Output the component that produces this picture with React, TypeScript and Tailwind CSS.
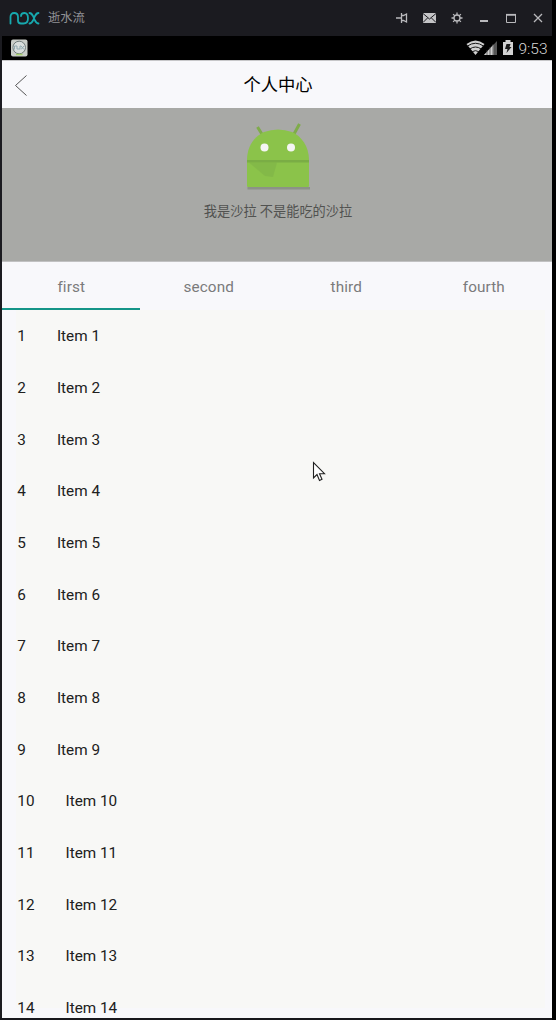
const tabs = ['first', 'second', 'third', 'fourth'];
const items = Array.from({ length: 14 }, (_, i) => i + 1);

function TitleBar() {
  return (
    <div className="flex h-9 shrink-0 items-center justify-between bg-[#1b1b20] pl-[9px] pr-[8px]">
      <div className="flex items-center gap-[8px]">
        <svg width="31" height="14" viewBox="0 0 31 14" fill="none" stroke="#17a9ae" strokeWidth="1.8" strokeLinecap="round" strokeLinejoin="round">
          <path d="M1.5 12.5V6Q1.5 2 5.2 2Q9 2 9 6V9.5Q9 12.5 12 12.5H14.500Q19 12.5 19 7.2Q19 2 15.5 2Q12 2 12 5M20.500 2Q22.500 2 24 5L26 9.5Q27.5 12.5 29.500 12.5M29.500 2Q27.5 2 26 5L24 9.5Q22.5 12.5 20.500 12.5" />
        </svg>
        <span className="pt-px text-[12.3px] leading-none text-[#929296]">逝水流</span>
      </div>
      <svg width="150" height="16" viewBox="394 10 150 16" fill="none" stroke="#b9b9bc" strokeWidth="1.3">
        <path d="M396 18H401M401.500 13V23M401.500 15.500H403.500L406.500 14V22L403.500 20.500H401.500" />
        <rect x="423" y="13" width="13" height="10" fill="#c4c4c6" stroke="none" />
        <path d="M423 13.5L429.5 19L436 13.5M423 22.5L427.5 18M436 22.5L431.5 18" stroke="#1b1b20" strokeWidth="1" />
        <circle cx="457" cy="18" r="3" />
        <path d="M457 12.5V15M457 21V23.5M451.5 18H454M460 18H462.500M453.100 14.100L454.900 15.900M459.100 20.100L460.900 21.900M460.900 14.100L459.100 15.900M454.900 20.100L453.100 21.900" />
        <path d="M480 21H488" strokeWidth="2" />
        <path d="M506.500 22.500V15H515.500V22.500Z" strokeWidth="1" />
        <path d="M506 14.700H516" strokeWidth="1.600" />
        <path d="M534 14L542 22M542 14L534 22" strokeWidth="1.300" />
      </svg>
    </div>
  );
}

function StatusBar() {
  return (
    <div className="flex h-6 shrink-0 items-center justify-between bg-black pl-[9px] pr-[3px]">
      <svg width="17" height="18" viewBox="0 0 17 18">
        <rect x="0" y="0.500" width="16.500" height="17" rx="2" fill="#c9cdc8" />
        <circle cx="8.200" cy="8.500" r="6.300" fill="#d9dedd" stroke="#717c7c" />
        <path d="M3.500 10.500V7H6V10H9V7H10L13 10.500M13 7L10 10.500" fill="none" stroke="#91aab1" />
        <path d="M5 15.500H11.500" stroke="#a7d16d" strokeWidth="1.500" />
      </svg>
      <div className="flex items-center">
        <svg width="50" height="18" viewBox="466 39 50 18" fill="none">
          <path d="M466.500 44Q475.500 37 484.500 44L475.500 55Z" fill="#d0d0d0" />
          <path d="M467.500 46Q475.500 40.500 483.500 46M469.800 49Q475.500 45 481.200 49M472 51.800Q475.500 49.500 479 51.800" stroke="#151515" strokeWidth="1" />
          <path d="M484 55L497 41V55Z" fill="#555" />
          <path d="M484 55L493.500 44.500V55Z" fill="#d0d0d0" />
          <path d="M487 50V55M490 47V55M493 44V55" stroke="#444" strokeWidth=".7" />
          <path d="M503 42H505.500V40H510.500V42H513V55H503Z" fill="#d2d2d2" />
          <path d="M506.500 44H510.500L509.500 47H511.500L506.500 53L507.500 49H505Z" fill="#191919" />
        </svg>
        <span className="w-[33px] pl-px pt-px text-center text-[15.500px] font-light leading-6 text-[#d6d6d6]">9:53</span>
      </div>
    </div>
  );
}

function Robot() {
  return (
    <svg width="72" height="76" viewBox="242 117 72 76" className="ml-[2px] block">
      <path d="M247.500 187H310V189.500H247.500Z" fill="#7c8676" opacity=".65" />
      <path d="M257.500 127L262.500 135M299.500 124L294 134" stroke="#7fac4a" strokeWidth="3" />
      <path d="M247 160C247 146 255 136 264 132Q271 129.500 278 129.500T292 132C301 136 309 146 309 160V186Q309 187 308 187H248Q247 187 247 186Z" fill="#8bc34a" />
      <path d="M247 160H309V162.500H247Z" fill="#7aad45" />
      <path d="M249 162.500H277L273 177L265 176Z" fill="#7fb347" opacity=".6" />
      <circle cx="264.500" cy="147.500" r="4" fill="#f4f5f4" />
      <circle cx="291" cy="147.500" r="4" fill="#f4f5f4" />
    </svg>
  );
}

export default function App() {
  return (
    <div className="relative h-[1020px] w-[556px] overflow-hidden bg-black font-['Roboto','Noto_Sans_CJK_SC',sans-serif]">
      <div className="flex h-full w-[552px] flex-col border-b-2 border-[#17171d] bg-[#1b1b20]">
        <TitleBar />
        <div className="ml-[2px] flex min-h-0 flex-1 flex-col bg-[#f8f8fb]">
          <StatusBar />
          <header className="relative flex h-12 shrink-0 items-center justify-center border-t border-[#c7c7c9]">
            <svg className="absolute left-[12px] top-[13px]" width="14" height="23" viewBox="0 0 14 23" fill="none" stroke="#555" strokeWidth="1">
              <path d="M12.500 1.500L1.500 11.500L12.500 21.500" />
            </svg>
            <h1 className="pl-[2px] pt-[2px] text-[17.300px] font-normal leading-none text-black">个人中心</h1>
          </header>
          <section className="flex h-[154px] shrink-0 flex-col items-center border-b border-[#c1c1c2] bg-[#a8a9a6] pt-[9px]">
            <Robot />
            <p className="mt-[10px] pl-[2px] text-[13.200px] leading-[18px] text-[#515250]">我是沙拉 不是能吃的沙拉</p>
          </section>
          <nav className="grid h-12 shrink-0 grid-cols-4">
            {tabs.map((tab, i) => (
              <div key={tab} className={`flex items-center justify-center border-b-2 pl-px pt-[4px] text-[15.300px] tracking-[0.100px] text-[#7b7b7b] ${i === 0 ? 'border-[#159588]' : 'border-transparent'}`}>
                {tab}
              </div>
            ))}
          </nav>
          <main className="mb-[10px] ml-[14px] mr-[7px] min-h-0 flex-1 bg-[#f8f8f6]">
            {items.map((n) => (
              <div key={n} className="flex h-[51.670px] items-center gap-[31px] pl-[1.300px] pt-[2px] text-[15.300px] text-[#202020]">
                <span>{n}</span>
                <span>Item {n}</span>
              </div>
            ))}
          </main>
        </div>
      </div>
      <svg className="absolute left-[312px] top-[461px]" width="14" height="22" viewBox="0 0 14 22">
        <path d="M1.500 1.500V17L5 13.500L7.500 19.500L10 18.300L7.500 12.700H12.500Z" fill="#fff" stroke="#202020" strokeWidth="1.100" />
      </svg>
    </div>
  );
}
